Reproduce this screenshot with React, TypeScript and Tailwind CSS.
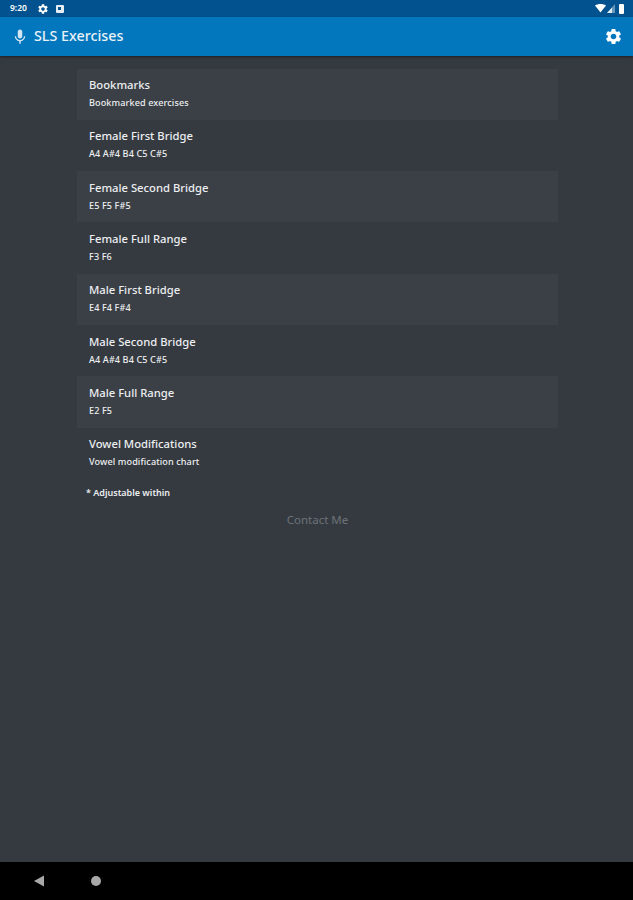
import { MdMic, MdSettings } from "react-icons/md";

const EXERCISES = [
  { title: "Bookmarks", detail: "Bookmarked exercises" },
  { title: "Female First Bridge", detail: "A4 A#4 B4 C5 C#5" },
  { title: "Female Second Bridge", detail: "E5 F5 F#5" },
  { title: "Female Full Range", detail: "F3 F6" },
  { title: "Male First Bridge", detail: "E4 F4 F#4" },
  { title: "Male Second Bridge", detail: "A4 A#4 B4 C5 C#5" },
  { title: "Male Full Range", detail: "E2 F5" },
  { title: "Vowel Modifications", detail: "Vowel modification chart" },
];

function StatusBar() {
  return (
    <div className="flex h-[17px] items-center justify-between bg-[#01528f] pl-[10px] pr-[9px] text-white">
      <div className="flex items-center">
        <span className="text-[8.5px] font-semibold leading-none">9:20</span>
        <MdSettings size={12} className="ml-[10px]" />
        <div className="ml-[7px] flex h-[8px] w-[8px] items-center justify-center rounded-[1px] bg-[#e6edf3]">
          <div className="h-[3px] w-[3px] bg-[#01528f]" />
        </div>
      </div>
      <div className="flex items-center gap-[1px]">
        <svg width="11" height="9" viewBox="0 0 11 9">
          <path d="M0 1.5C3 -0.5 8 -0.5 11 1.5L5.5 8.5Z" fill="#fff" />
        </svg>
        <svg width="8" height="9" viewBox="0 0 8 9">
          <path d="M8 0V9H0Z" fill="#fff" fillOpacity="0.4" />
          <path d="M5 3.5V9H0Z" fill="#fff" fillOpacity="0.8" />
        </svg>
        <div className="ml-[3px] h-[10px] w-[5px] rounded-[1px] bg-white" />
      </div>
    </div>
  );
}

export default function App() {
  return (
    <div className="flex h-[900px] w-[633px] flex-col overflow-hidden bg-[#353a40] font-['Noto_Sans',sans-serif] text-white">
      <StatusBar />
      <header className="flex h-[39px] items-center justify-between bg-[#0277bd] pl-[11px] pr-[10px] shadow-[0_1px_2px_#1c1f22]">
        <div className="flex items-center gap-[5px]">
          <MdMic size={18} className="text-[#d5e6f2]" />
          <h1 className="text-[14.3px] font-medium leading-none text-[#e8f1f7]">SLS Exercises</h1>
        </div>
        <MdSettings size={19} />
      </header>

      <main className="flex flex-1 flex-col pl-[77px] pr-[75px] pt-[12.5px]">
        {EXERCISES.map((exercise, index) => (
          <div
            key={exercise.title}
            className={`flex h-[51.3px] flex-col justify-center pl-[12px] ${index % 2 === 0 ? "bg-[#3b4046]" : "bg-[#353a40]"}`}
          >
            <p className="text-[11.25px] font-medium leading-[15px] text-[#eceef0]">{exercise.title}</p>
            <p className="mt-[2px] text-[9.1px] font-medium leading-[17px] tracking-[0.1px] text-[#eceef0]">{exercise.detail}</p>
          </div>
        ))}
        <p className="mt-[7.5px] pl-[9px] text-[9px] font-semibold leading-[14px] text-[#eceef0]">* Adjustable within</p>
        <p className="mt-[12px] text-center text-[11.5px] leading-[16px] text-[#6c7278]">Contact Me</p>
      </main>

      <nav className="flex h-[38px] items-center bg-black pl-[33px] pr-[10px]">
        <svg width="12" height="12" viewBox="0 0 12 12">
          <path d="M1 6L11 0.5V11.5Z" fill="#a8a8a8" />
        </svg>
        <div className="ml-[46px] h-[10px] w-[10px] rounded-full bg-[#a8a8a8]" />
      </nav>
    </div>
  );
}
